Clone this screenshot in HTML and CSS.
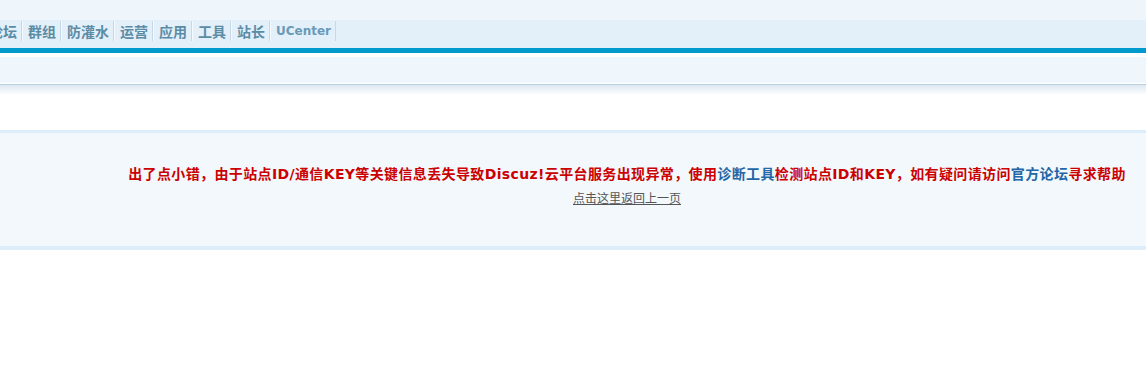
FILE: index.html
```html
<!DOCTYPE html>
<html lang="zh-CN">
<head>
<meta charset="utf-8">
<title>提示信息</title>
<link rel="stylesheet" href="styles.css">
</head>
<body>
<div class="header">
  <div class="topstrip"></div>
  <div class="navbar">
    <ul class="nav">
      <li class="nav-item">论坛</li>
      <li class="nav-item">群组</li>
      <li class="nav-item">防灌水</li>
      <li class="nav-item">运营</li>
      <li class="nav-item">应用</li>
      <li class="nav-item">工具</li>
      <li class="nav-item">站长</li>
      <li class="nav-item nav-latin">UCenter</li>
    </ul>
  </div>
  <div class="blueline"></div>
  <div class="subbar"></div>
  <div class="subshadow"></div>
</div>
<div class="spacer"></div>
<div class="infobox">
  <p class="error">出了点小错，由于站点ID/通信KEY等关键信息丢失导致Discuz!云平台服务出现异常，使用<a class="elink" href="#">诊断工具</a>检测站点ID和KEY，如有疑问请访问<a class="elink" href="#">官方论坛</a>寻求帮助</p>
  <p class="back"><a class="backlink" href="#">点击这里返回上一页</a></p>
</div>
</body>
</html>
```
FILE: styles.css
```css
html, body {
  margin: 0;
  padding: 0;
  background: #fff;
}
body {
  font: 12px/1.5 "DejaVu Sans", "Noto Sans CJK SC", sans-serif;
  overflow: hidden;
}
.header {
  overflow: hidden;
}
.topstrip {
  height: 20px;
  background: #eef5fb;
}
.navbar {
  height: 28px;
  background: #e3eff9;
  display: flex;
  align-items: flex-start;
  overflow: hidden;
}
.nav {
  list-style: none;
  margin: 1px 0 0 -17px;
  padding: 0;
  display: flex;
  align-items: center;
  height: 20px;
}
.nav-item {
  font-family: "Noto Sans CJK SC", sans-serif;
  font-size: 14px;
  font-weight: 700;
  line-height: 20px;
  color: #5b8ca6;
  padding: 0 4px 0 5px;
  border-left: 1px solid #f4f9fd;
  border-right: 1px solid #c6d9e6;
  height: 20px;
  white-space: nowrap;
}
.nav-latin {
  font-family: "DejaVu Sans", sans-serif;
  font-size: 12px;
  color: #6a9ab8;
}
.blueline {
  height: 5px;
  background: #009acd;
}
.subbar {
  margin-top: 4px;
  height: 26px;
  background: #f0f7fc;
  border-bottom: 1px solid #fff;
}
.subshadow {
  height: 10px;
  border-top: 1px solid #b9d0df;
  background: linear-gradient(#dce8f1, #ffffff);
}
.spacer {
  height: 35px;
}
.infobox {
  border-top: 3px solid #ddedf9;
  border-bottom: 4px solid #ddedf9;
  background: #f2f8fc;
  height: 113px;
  box-sizing: content-box;
  padding: 0 0 0 108px;
  text-align: center;
}
.error {
  margin: 0;
  padding-top: 31px;
  font-size: 14px;
  font-weight: 700;
  line-height: 21px;
  letter-spacing: 0.37px;
  color: #cc0000;
  white-space: nowrap;
}
.elink {
  color: #2366a8;
  text-decoration: none;
}
.back {
  margin: 4px 0 0;
  font-family: "Noto Sans CJK SC", sans-serif;
  font-size: 12px;
  line-height: 18px;
}
.backlink {
  color: #555;
  text-decoration: underline;
}
```
